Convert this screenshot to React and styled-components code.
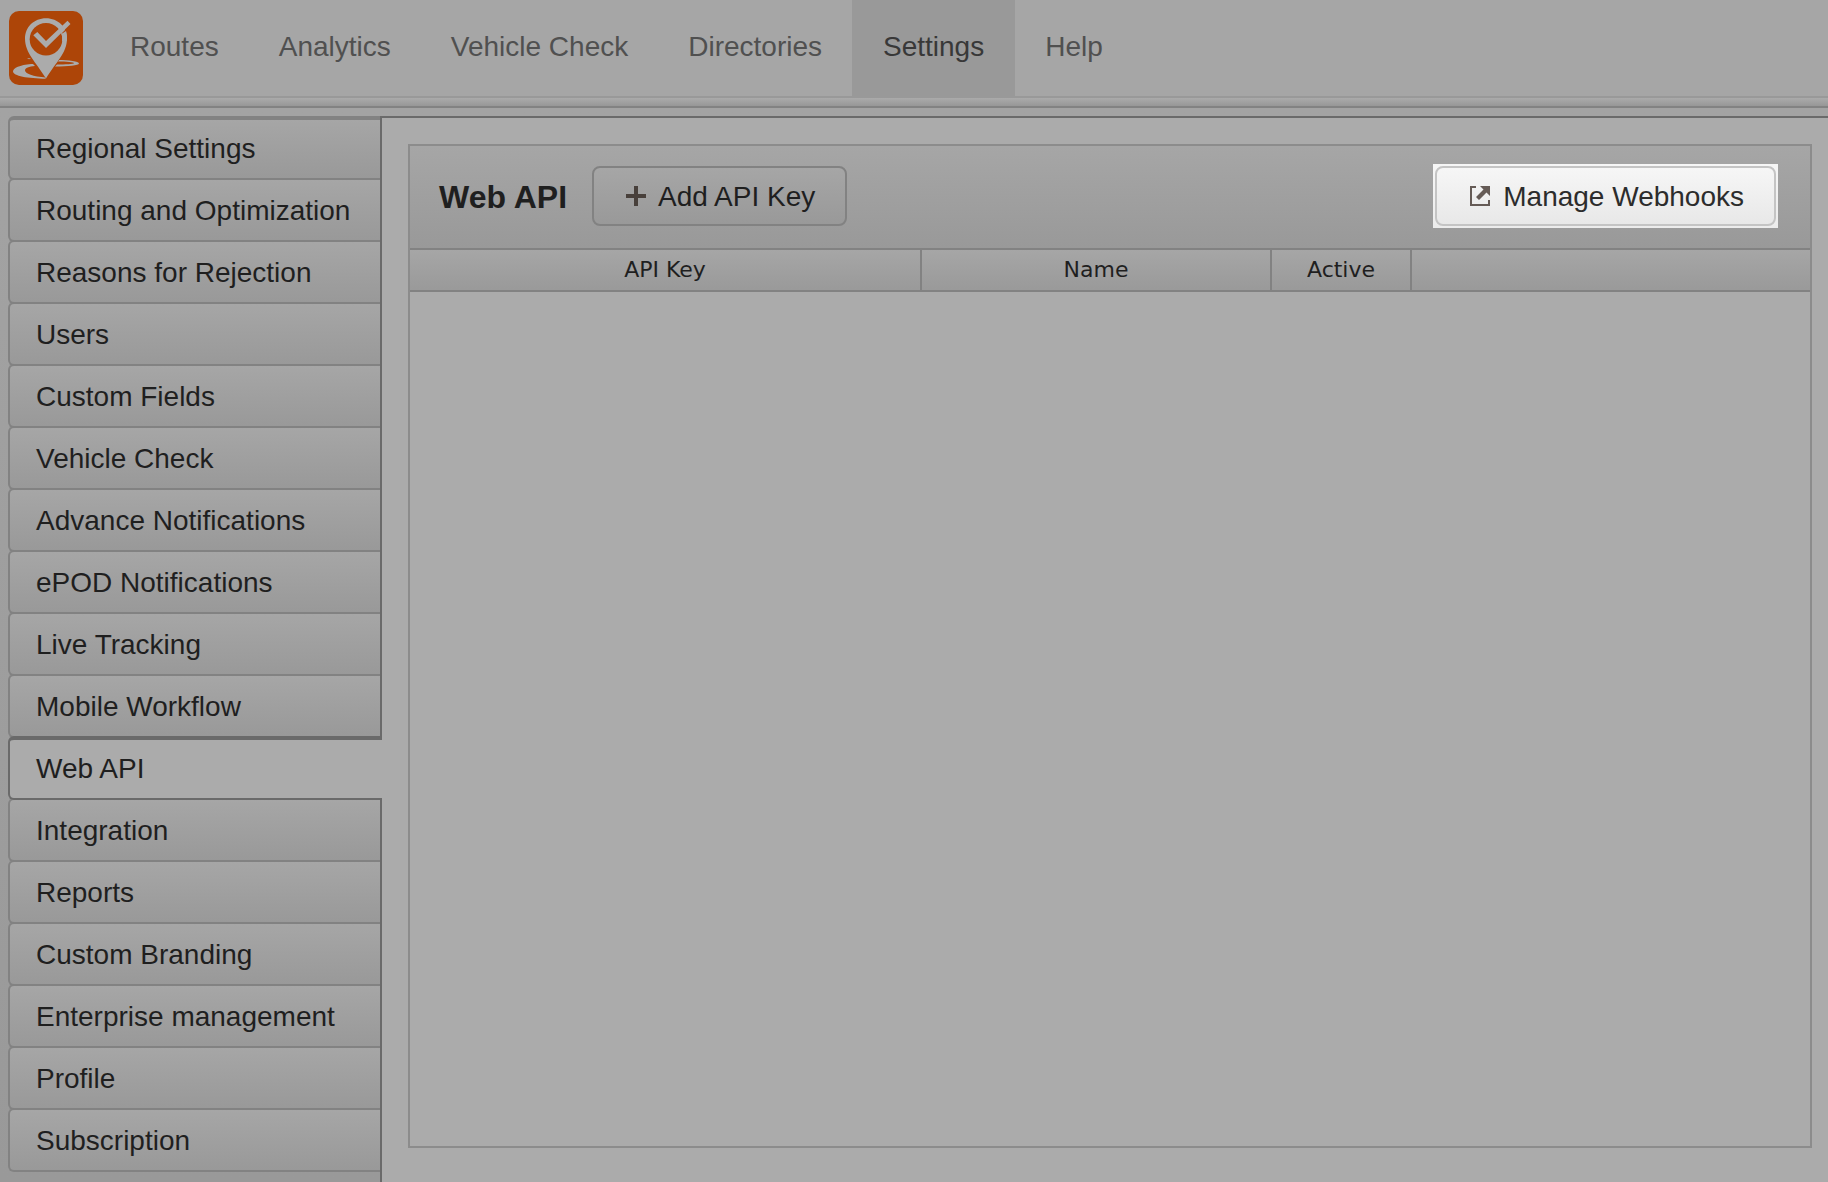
import React from "react";
import styled, { createGlobalStyle, css } from "styled-components";

const line = "#828282";
const darkLine = "#6a6a6a";
const surface = "#ababab";
const shade = "linear-gradient(#a6a6a6, #999999)";

const GlobalStyle = createGlobalStyle`
  *, *::before, *::after { box-sizing: border-box; }
  body {
    margin: 0;
    background: #9f9f9f;
    color: #1f1f1f;
    font: 28px/32px "Liberation Sans", Arial, Helvetica, sans-serif;
  }
  button { font: inherit; color: inherit; cursor: pointer; }
`;

const Page = styled.div`
  display: flex;
  flex-direction: column;
  min-height: 100vh;
`;

const TopBar = styled.header`
  display: flex;
  height: 98px;
  background: #a6a6a6;
  border-bottom: 2px solid #999999;
`;

const LogoLink = styled.a`
  display: block;
  width: 100px;
  padding: 11px 0 0 9px;

  svg { display: block; }
`;

const TopNav = styled.nav`
  display: flex;
`;

const TopLink = styled.a`
  height: 96px;
  padding: 31px ${(p) => (p.$active ? "31px" : "30px")};
  color: ${(p) => (p.$active ? "#383838" : "#505050")};
  background: ${(p) => (p.$active ? "#999999" : "transparent")};
  text-decoration: none;
  white-space: nowrap;
`;

const Divider = styled.div`
  height: 10px;
  background: linear-gradient(#ababab, #979797);
  border-bottom: 2px solid ${line};
`;

const Main = styled.div`
  flex: 1;
  display: flex;
  padding-top: 8px;
  background: linear-gradient(#a3a3a3, #999999);
`;

const Sidebar = styled.nav`
  flex: none;
  width: 380px;
  padding-left: 8px;
`;

const SideList = styled.ul`
  display: flex;
  flex-direction: column;
  margin: 0;
  padding: 0;
  list-style: none;
`;

const SideItem = styled.li`
  & + & { margin-top: -2px; }
`;

const SideLink = styled.a`
  display: flex;
  align-items: flex-end;
  height: 64px;
  padding: 0 0 13px 26px;
  border: 2px solid ${line};
  border-right: 0;
  border-radius: 6px 0 0 6px;
  background: ${shade};
  color: inherit;
  text-decoration: none;
  white-space: nowrap;

  ${SideItem}:first-child & { border-top-width: 4px; }

  ${(p) =>
    p.$active &&
    css`
      position: relative;
      z-index: 1;
      margin-right: -2px;
      border-color: ${darkLine};
      border-top-width: 4px;
      background: ${surface};
    `}
`;

const Content = styled.main`
  flex: 1;
  min-width: 0;
  display: flex;
  padding: 26px 16px 34px 26px;
  border: solid ${darkLine};
  border-width: 2px 0 0 2px;
  background: ${surface};
`;

const Panel = styled.section`
  flex: 1;
  min-width: 0;
  border: 2px solid #8c8c8c;
`;

const PanelHeader = styled.div`
  display: flex;
  align-items: center;
  height: 104px;
  padding: 18px 32px 20px 29px;
  border-bottom: 2px solid ${line};
  background: ${shade};
`;

const Title = styled.h1`
  margin: 0 25px 0 0;
  padding-top: 2px;
  font-size: 32px;
  line-height: 36px;
  white-space: nowrap;
`;

const Button = styled.button`
  display: flex;
  align-items: center;
  gap: 12px;
  height: 60px;
  padding: 0 30px 0 32px;
  border: 2px solid ${(p) => (p.$lit ? "#c4c4c4" : line)};
  border-radius: 8px;
  background: ${(p) => (p.$lit ? "linear-gradient(#f6f6f6, #e8e8e8)" : shade)};
  color: ${(p) => (p.$lit ? "#2c2c2c" : "inherit")};
  white-space: nowrap;

  svg { flex: none; }
`;

const ButtonLabel = styled.span`
  padding-top: 2px;
`;

const Spotlight = styled.div`
  margin-left: auto;
  padding: 2px;
  background: linear-gradient(#f6f6f6, #ececec);
`;

const Table = styled.table`
  width: 100%;
  table-layout: fixed;
  border-collapse: separate;
  border-spacing: 0;
  font: 22px/26px "DejaVu Sans", Verdana, sans-serif;
`;

const HeadRow = styled.tr`
  background: ${shade};
`;

const HeadCell = styled.th`
  width: ${(p) => p.$width || "auto"};
  height: 42px;
  padding: 0;
  border: solid ${line};
  border-width: 0 2px 2px 0;
  font-weight: 400;
  text-align: center;

  &:last-child { border-right: 0; }
`;

const Logo = () => (
  <svg width="74" height="74" viewBox="0 0 74 74" aria-hidden="true">
    <rect width="74" height="74" rx="10" fill="#ad4508" />
    <path
      fill="#ababab"
      d="M22 53C11 54 4 57 4 60.500C4 65 19 67.500 37 67.700L37 66.500C24 65.500 16 62.500 16 59.500C16 57 20 55.500 26 55L24 53Z"
    />
    <path
      fill="#ababab"
      d="M49 49C60 49 70 50.500 70 52.500C70 54.500 59 55.300 46 55.500L48 53.500C56 53.400 65 53 65 52.200C65 51.200 58 50.600 48 50.600Z"
    />
    <path d="M18 47L22 47.600L20 48.200Z" fill="#ababab" />
    <path
      fill="#ababab"
      stroke="#ad4508"
      strokeWidth="1"
      paintOrder="stroke"
      d="M37 7.200C25 7.200 16 16 16 27.500C16 42 27 51 37 67.500C47 51 58 42 58 27.500C58 16 49 7.200 37 7.200Z"
    />
    <circle cx="37" cy="28.200" r="16.300" fill="#ad4508" />
    <path d="M53 22L58 17L59.500 20L54.500 25Z" fill="#ad4508" />
    <path
      fill="#ababab"
      d="M24.300 24.300L28.300 21L37 30L58.500 9.800L61.500 13L37 37Z"
    />
    <path d="M57 20C58 22.500 58.200 26 57.800 30L53 30C53.400 27 53 24.500 52.500 23Z" fill="#ababab" />
  </svg>
);

const PlusIcon = () => (
  <svg width="20" height="20" viewBox="0 0 20 20" aria-hidden="true">
    <path d="M8 0h4v8h8v4h-8v8H8v-8H0V8h8z" fill="#48403b" />
  </svg>
);

const OpenIcon = () => (
  <svg width="22" height="20" viewBox="0 0 22 20" aria-hidden="true">
    <path d="M7 1H2V19H20V14" fill="none" stroke="#655b56" strokeWidth="2" />
    <path d="M11 0H21V10L17.500 6.500L10 14L7 11L14.500 3.500Z" fill="#655b56" />
  </svg>
);

const topLinks = ["Routes", "Analytics", "Vehicle Check", "Directories", "Settings", "Help"];

const sideLinks = [
  "Regional Settings",
  "Routing and Optimization",
  "Reasons for Rejection",
  "Users",
  "Custom Fields",
  "Vehicle Check",
  "Advance Notifications",
  "ePOD Notifications",
  "Live Tracking",
  "Mobile Workflow",
  "Web API",
  "Integration",
  "Reports",
  "Custom Branding",
  "Enterprise management",
  "Profile",
  "Subscription",
];

const columns = [
  { label: "API Key", width: "512px" },
  { label: "Name", width: "350px" },
  { label: "Active", width: "140px" },
  { label: "" },
];

export default function App() {
  return (
    <Page>
      <GlobalStyle />
      <TopBar>
        <LogoLink href="#home" aria-label="Home">
          <Logo />
        </LogoLink>
        <TopNav aria-label="Main">
          {topLinks.map((label) => (
            <TopLink key={label} href="#" $active={label === "Settings"}>
              {label}
            </TopLink>
          ))}
        </TopNav>
      </TopBar>
      <Divider />
      <Main>
        <Sidebar aria-label="Settings">
          <SideList>
            {sideLinks.map((label) => (
              <SideItem key={label}>
                <SideLink href="#" $active={label === "Web API"}>
                  {label}
                </SideLink>
              </SideItem>
            ))}
          </SideList>
        </Sidebar>
        <Content>
          <Panel>
            <PanelHeader>
              <Title>Web API</Title>
              <Button type="button">
                <PlusIcon />
                <ButtonLabel>Add API Key</ButtonLabel>
              </Button>
              <Spotlight>
                <Button type="button" $lit>
                  <OpenIcon />
                  <ButtonLabel>Manage Webhooks</ButtonLabel>
                </Button>
              </Spotlight>
            </PanelHeader>
            <Table>
              <thead>
                <HeadRow>
                  {columns.map((c) => (
                    <HeadCell key={c.label} scope="col" $width={c.width}>
                      {c.label}
                    </HeadCell>
                  ))}
                </HeadRow>
              </thead>
            </Table>
          </Panel>
        </Content>
      </Main>
    </Page>
  );
}
